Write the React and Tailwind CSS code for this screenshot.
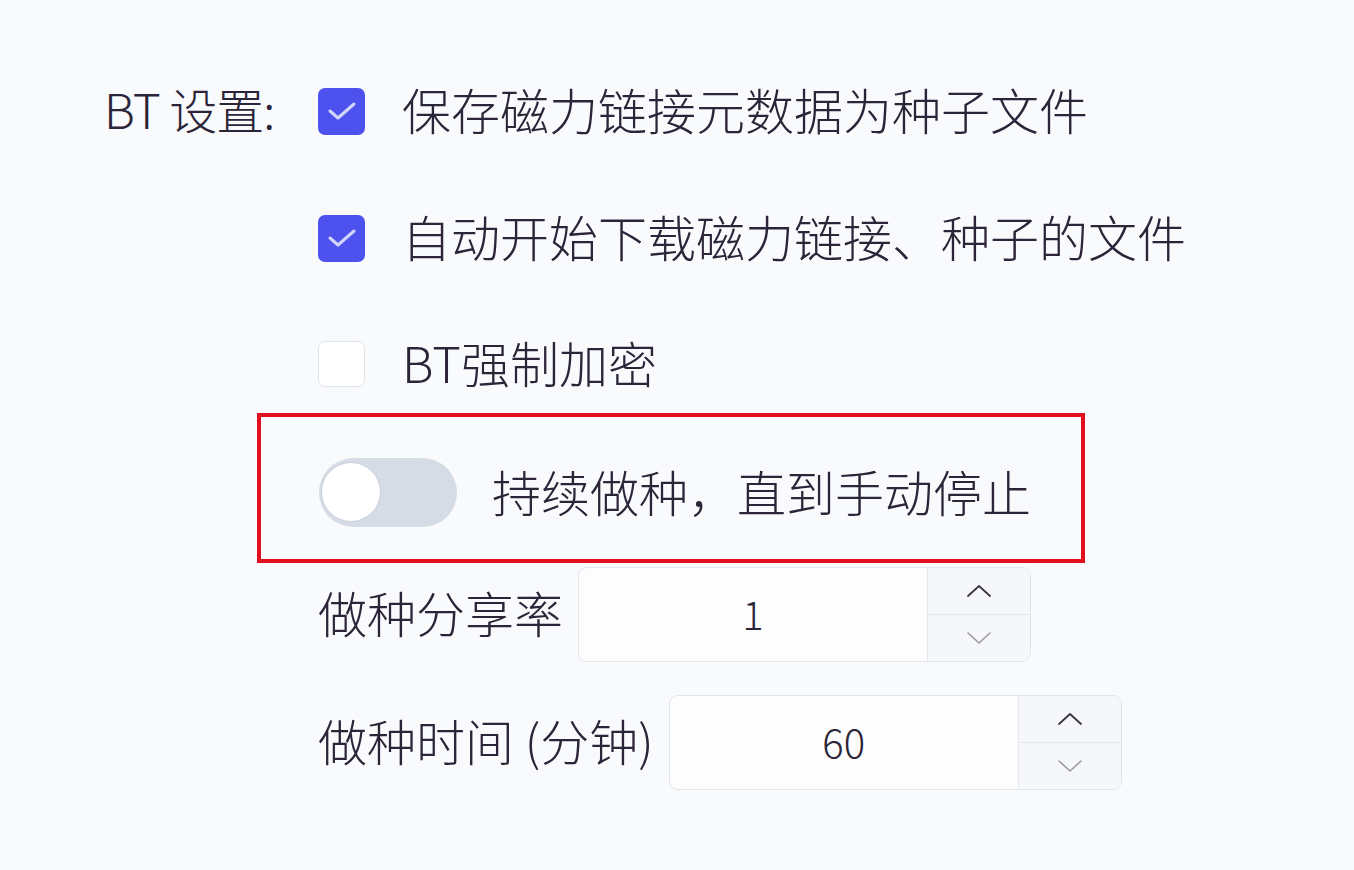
import React from "react";

const font = { fontFamily: '"Noto Sans CJK SC", "Noto Sans", sans-serif' };

function Check({ checked }) {
  if (checked) {
    return (
      <div className="w-[47px] h-[47px] rounded-[7px] bg-[#4d52ef] flex items-center justify-center shrink-0">
        <svg width="30" height="22" viewBox="0 0 30 22" fill="none">
          <polyline points="3,11 11,18 27,4" stroke="#d4d5fb" strokeWidth="3" strokeLinecap="round" strokeLinejoin="round" />
        </svg>
      </div>
    );
  }
  return <div className="w-[47px] h-[46px] rounded-[7px] border border-[#dfe3ea] bg-white shrink-0" />;
}

function Spin({ label, value }) {
  return (
    <div className="flex items-center gap-[15px]">
      <span className="text-[49px] leading-none text-[#2c2438] whitespace-nowrap font-light pb-[6px]">{label}</span>
      <div className="flex h-[95px] w-[453px] rounded-[9px] border border-[#e0e4eb] bg-[#fdfdfe] overflow-hidden">
        <div className="flex-1 flex items-center justify-center text-[40px] leading-none font-light text-[#2c2438] pb-[4px]">{value}</div>
        <div className="w-[103px] flex flex-col border-l border-[#e6e9ef] bg-[#f6f7fa]">
          <div className="flex-1 flex items-center justify-center border-b border-[#e3e6ec]">
            <svg width="26" height="14" viewBox="0 0 26 14" fill="none">
              <polyline points="2,12 13,2 24,12" stroke="#3a3444" strokeWidth="1.8" strokeLinecap="round" strokeLinejoin="round" />
            </svg>
          </div>
          <div className="flex-1 flex items-center justify-center">
            <svg width="26" height="14" viewBox="0 0 26 14" fill="none">
              <polyline points="2,2 13,12 24,2" stroke="#9a9aa3" strokeWidth="1.6" strokeLinecap="round" strokeLinejoin="round" />
            </svg>
          </div>
        </div>
      </div>
    </div>
  );
}

export default function App() {
  return (
    <div className="min-h-screen w-full bg-[#f9fafc] text-[#2c2438] font-light" style={font}>
      <div className="flex pt-[81px] pl-[104px]">
        <div className="w-[214px] h-[60px] flex items-center shrink-0">
          <span className="text-[48px] leading-none whitespace-nowrap tracking-[-1px] pb-[6px]">BT 设置:</span>
        </div>
        <div className="flex flex-col">
          <div className="h-[60px] flex items-center gap-[37px]">
            <Check checked />
            <span className="text-[49px] leading-none whitespace-nowrap pb-[6px]">保存磁力链接元数据为种子文件</span>
          </div>
          <div className="h-[60px] mt-[67px] flex items-center gap-[37px]">
            <Check checked />
            <span className="text-[49px] leading-none whitespace-nowrap pb-[6px]">自动开始下载磁力链接、种子的文件</span>
          </div>
          <div className="h-[60px] mt-[66px] flex items-center gap-[37px]">
            <Check checked={false} />
            <span className="text-[49px] leading-none whitespace-nowrap pb-[6px]">BT强制加密</span>
          </div>
          <div className="mt-[19px] ml-[-61px] w-[828px] h-[150px] border-[4px] border-[#e2101e] flex items-center pl-[58px] pt-[8px]">
            <div className="flex items-center gap-[35px]">
              <div className="w-[138px] h-[69px] rounded-full bg-[#d6dce6] flex items-center pl-[2px]">
                <div className="w-[60px] h-[60px] rounded-full bg-white border border-[#c9cfda]" />
              </div>
              <span className="text-[49px] leading-none whitespace-nowrap pb-[4px]">持续做种，直到手动停止</span>
            </div>
          </div>
          <div className="mt-[4px]">
            <Spin label="做种分享率" value="1" />
          </div>
          <div className="mt-[33px]">
            <Spin label="做种时间 (分钟)" value="60" />
          </div>
        </div>
      </div>
    </div>
  );
}
